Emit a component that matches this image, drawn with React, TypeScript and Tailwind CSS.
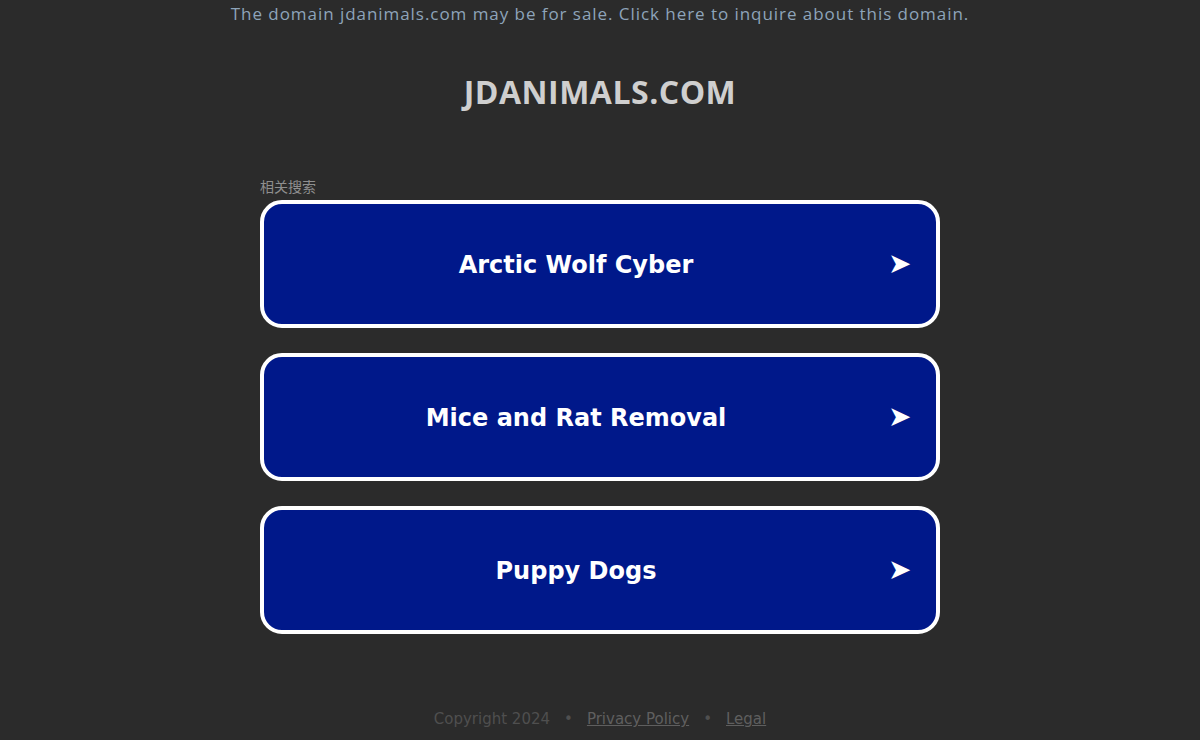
const links = ["Arctic Wolf Cyber", "Mice and Rat Removal", "Puppy Dogs"];

const App = () => {
  return (
    <div className="min-h-[740px] bg-[#2b2b2b] flex flex-col items-center">
      {/* Sale banner */}
      <p className="text-[17px] leading-[28px] tracking-[0.95px] text-[#8ea4ba] font-['Open_Sans',sans-serif] cursor-pointer">
        The domain jdanimals.com may be for sale. Click here to inquire about this domain.
      </p>

      <h1 className="mt-[44px] text-[32px] leading-[40px] tracking-[0.5px] font-bold text-[#cfcfcf] font-['Open_Sans',sans-serif]">
        JDANIMALS.COM
      </h1>

      <div className="w-[680px] mt-[66px]">
        <div className="text-[14px] leading-[16px] text-[#8f8f8f] mb-[6px] font-['Noto_Sans_CJK_SC',sans-serif]">
          相关搜索
        </div>

        <div className="flex flex-col gap-[25px]">
          {links.map((label) => (
            <a
              key={label}
              href="#"
              className="h-[128px] flex items-center rounded-[22px] border-4 border-white bg-[#00188a] text-white"
            >
              <span className="flex-1 text-center text-[24px] leading-[30px] pt-[2px] font-bold font-['DejaVu_Sans',sans-serif]">
                {label}
              </span>
              <span className="w-[48px] text-left text-[28px] leading-none font-['DejaVu_Sans',sans-serif]">
                ➤
              </span>
            </a>
          ))}
        </div>
      </div>

      {/* Footer */}
      <div className="mt-[75px] flex items-center gap-[14px] text-[15px] leading-[20px] font-['DejaVu_Sans',sans-serif] text-[#4f4f4f]">
        <span>Copyright 2024</span>
        <span>•</span>
        <a href="#" className="underline text-[#5f5f5f]">
          Privacy Policy
        </a>
        <span>•</span>
        <a href="#" className="underline text-[#5f5f5f]">
          Legal
        </a>
      </div>
    </div>
  );
};

export default App;
